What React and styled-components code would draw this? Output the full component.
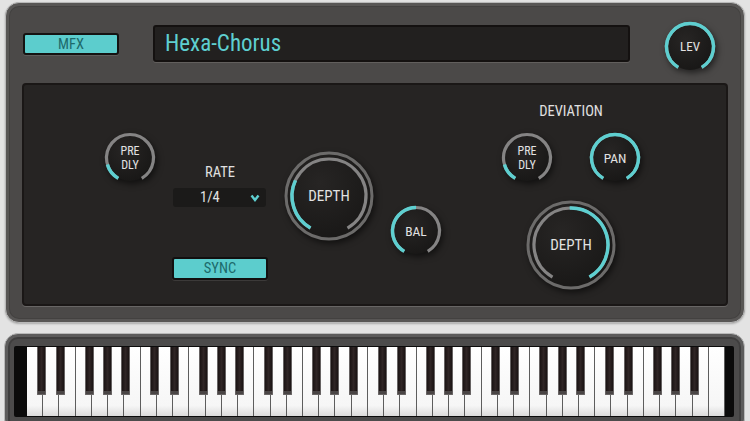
import styled, { createGlobalStyle } from 'styled-components'

const FONT = '"Liberation Sans Narrow", "Roboto Condensed", "DejaVu Sans Condensed", Roboto, sans-serif'
const CYAN = '#5ecfd0'

const GlobalStyle = createGlobalStyle`
    html, body {
        margin: 0;
        padding: 0;
        background: #e3e3e3;
    }
    * {
        box-sizing: border-box;
    }
`

const polar = (c, r, deg) => {
    const a = (deg * Math.PI) / 180
    return [c + r * Math.sin(a), c - r * Math.cos(a)]
}

const arc = (c, r, from, to) => {
    const [x1, y1] = polar(c, r, from)
    const [x2, y2] = polar(c, r, to)
    const large = to - from > 180 ? 1 : 0
    return `M ${x1.toFixed(2)} ${y1.toFixed(2)} A ${r} ${r} 0 ${large} 1 ${x2.toFixed(2)} ${y2.toFixed(2)}`
}

function Knob({ big, from, to, lines, fontSize = 12 }) {
    const size = big ? 100 : 56
    const c = size / 2
    const r = big ? 37 : 23.5
    return (
        <KnobWrap $size={size}>
            <svg width={size} height={size} viewBox={`0 0 ${size} ${size}`}>
                <defs>
                    <radialGradient id="kbody" cx="40%" cy="35%" r="70%">
                        <stop offset="0%" stopColor="#272524" />
                        <stop offset="100%" stopColor="#181716" />
                    </radialGradient>
                </defs>
                {big ? (
                    <>
                        <circle cx={c} cy={c} r={44} fill="url(#kbody)" />
                        <circle cx={c} cy={c} r={43} fill="none" stroke="#6c6b6a" strokeWidth="3" />
                    </>
                ) : (
                    <circle cx={c} cy={c} r={23} fill="url(#kbody)" />
                )}
                <path d={arc(c, r, -150, 150)} fill="none" stroke="#858484" strokeWidth="3.2" />
                <path d={arc(c, r, from, to)} fill="none" stroke={CYAN} strokeWidth="3.4" />
            </svg>
            <KnobLabel $fontSize={fontSize}>
                {lines.map(l => <span key={l}>{l}</span>)}
            </KnobLabel>
        </KnobWrap>
    )
}

const WHITE_COUNT = 43
const BLACK_OFFSETS = { 0: -2, 1: 1, 3: -2.5, 4: -0.5, 5: 1.5 }

function Keyboard() {
    const whites = Array.from({ length: WHITE_COUNT }, (_, i) => i)
    const blacks = whites.filter(i => i < WHITE_COUNT - 1 && BLACK_OFFSETS[i % 7] !== undefined)
    return (
        <KeyboardFrame>
            <KeyBed>
                <KeyRow>
                    {whites.map(i => <WhiteKey key={i} />)}
                    {blacks.map(i => (
                        <BlackKey
                            key={'b' + i}
                            style={{ left: `calc(${((i + 1) / WHITE_COUNT) * 100}% + ${BLACK_OFFSETS[i % 7] - 4.5}px)` }}
                        />
                    ))}
                </KeyRow>
            </KeyBed>
        </KeyboardFrame>
    )
}

function App() {
    return (
        <Screen>
            <GlobalStyle />
            <TopPanel>
                <Header>
                    <MfxButton>MFX</MfxButton>
                    <TitleDisplay>Hexa-Chorus</TitleDisplay>
                    <LevSlot>
                        <Knob from={-150} to={150} lines={['LEV']} fontSize={13} />
                    </LevSlot>
                </Header>
                <Stage>
                    <Column $left={78} $top={45}>
                        <Knob from={-150} to={-106} lines={['PRE', 'DLY']} fontSize={12} />
                    </Column>
                    <RateColumn>
                        <SectionLabel>RATE</SectionLabel>
                        <Dropdown>
                            <span>1/4</span>
                            <svg width="10" height="8" viewBox="0 0 10 8">
                                <polyline points="1.5,1.5 5,6 8.5,1.5" fill="none" stroke={CYAN} strokeWidth="2.4" />
                            </svg>
                        </Dropdown>
                        <SyncButton>SYNC</SyncButton>
                    </RateColumn>
                    <Column $left={11} $top={61}>
                        <Knob big from={-150} to={-65} lines={['DEPTH']} fontSize={15} />
                    </Column>
                    <Column $left={9} $top={118}>
                        <Knob from={-150} to={0} lines={['BAL']} fontSize={13.5} />
                    </Column>
                    <DeviationGroup>
                        <SectionLabel>DEVIATION</SectionLabel>
                        <KnobPair>
                            <Knob from={-150} to={-106} lines={['PRE', 'DLY']} fontSize={12} />
                            <Knob from={-150} to={150} lines={['PAN']} fontSize={13.5} />
                        </KnobPair>
                        <DepthSlot>
                            <Knob big from={-2} to={150} lines={['DEPTH']} fontSize={15} />
                        </DepthSlot>
                    </DeviationGroup>
                </Stage>
            </TopPanel>
            <Keyboard />
        </Screen>
    )
}

export default App

const Screen = styled.div`
    width: 750px;
    height: 421px;
    overflow: hidden;
    padding-top: 2px;
    background: #e3e3e3;
    font-family: ${FONT};
`

const TopPanel = styled.div`
    margin: 0 5px;
    height: 321px;
    padding: 0 16px;
    border: 1px solid #b9b9b9;
    border-radius: 14px;
    background: #4b4948;
    box-shadow: inset 0 0 0 3px #585655, inset 0 0 0 4px #434140, 0 1px 2px rgba(0, 0, 0, 0.25);
`

const Header = styled.div`
    display: flex;
    align-items: center;
    height: 80px;
`

const MfxButton = styled.div`
    margin: 2px 0 0 1px;
    width: 96px;
    height: 22px;
    display: flex;
    align-items: center;
    justify-content: center;
    border: 2px solid #151312;
    border-radius: 3px;
    background: #5ccdcd;
    color: #1d6a6b;
    font-size: 14.5px;
    box-shadow: 0 1px 0 #5e5c5b;
`

const TitleDisplay = styled.div`
    margin-left: 34px;
    width: 477px;
    height: 37px;
    display: flex;
    align-items: center;
    padding-left: 10px;
    border: 2px solid #141110;
    border-radius: 3px;
    background: #22201f;
    color: ${CYAN};
    font-size: 23px;
    box-shadow: 0 1px 0 #625f5d;
`

const LevSlot = styled.div`
    margin: 8px 0 0 32px;
`

const Stage = styled.div`
    display: flex;
    align-items: flex-start;
    height: 223px;
    border: 2px solid #1a1716;
    border-radius: 4px;
    background: #262423;
    box-shadow: 0 1px 0 #686665;
`

const Column = styled.div`
    margin-left: ${p => p.$left}px;
    margin-top: ${p => p.$top}px;
`

const KnobWrap = styled.div`
    display: grid;
    width: ${p => p.$size}px;
    height: ${p => p.$size}px;

    & > * {
        grid-area: 1 / 1;
    }

    svg {
        filter: drop-shadow(2px 3px 3px rgba(0, 0, 0, 0.55));
    }
`

const KnobLabel = styled.div`
    position: relative;
    z-index: 1;
    place-self: center;
    display: flex;
    flex-direction: column;
    align-items: center;
    color: #e2e2e2;
    font-size: ${p => p.$fontSize}px;
    line-height: 14px;
`

const SectionLabel = styled.div`
    height: 16px;
    line-height: 16px;
    text-align: center;
    color: #e0e0e0;
    font-size: 14.5px;
`

const RateColumn = styled.div`
    margin-left: 14px;
    width: 96px;
    padding-top: 80px;
    display: flex;
    flex-direction: column;
`

const Dropdown = styled.div`
    margin: 7px 0 0 1px;
    width: 93px;
    height: 19px;
    display: flex;
    align-items: center;
    justify-content: space-between;
    padding: 0 6px 0 27px;
    border-radius: 3px;
    background: #1b1a19;
    color: #e2e2e2;
    font-size: 14.5px;
`

const SyncButton = styled.div`
    margin-top: 50px;
    height: 23px;
    display: flex;
    align-items: center;
    justify-content: center;
    border: 2px solid #121010;
    border-radius: 3px;
    background: #5ccdcd;
    color: #1d6a6b;
    font-size: 14.5px;
    box-shadow: 0 1px 0 #3c3a39;
`

const DeviationGroup = styled.div`
    margin-left: 55px;
    width: 144px;
    padding-top: 19px;
    display: flex;
    flex-direction: column;
    align-items: center;
`

const KnobPair = styled.div`
    margin-top: 10px;
    display: flex;
    gap: 32px;
`

const DepthSlot = styled.div`
    margin-top: 9px;
`

const KeyboardFrame = styled.div`
    margin: 10px 5px 0 4px;
    height: 100px;
    padding: 12px 10px 0 9px;
    border: 1px solid #b9b9b9;
    border-radius: 14px;
    background: #4c4b4b;
    box-shadow: inset 0 0 0 3px #5c5b5b, inset 0 0 0 5px #3f3e3e;
`

const KeyBed = styled.div`
    padding: 1px 9px 1px 13px;
    background: #0b0b0b;
    border-radius: 2px;
`

const KeyRow = styled.div`
    position: relative;
    display: flex;
    height: 69px;
`

const WhiteKey = styled.div`
    flex: 1;
    background: linear-gradient(#ffffff, #f6f6f6 85%, #dcdcdc);
    border-right: 1px solid #5d5d5d;

    &:last-of-type {
        border-right: none;
    }
`

const BlackKey = styled.div`
    position: absolute;
    top: 0;
    width: 9px;
    height: 48px;
    border: 1px solid #676363;
    border-top: none;
    border-radius: 0 0 1px 1px;
    background: linear-gradient(90deg, #1a1313, #2f2525 50%, #1a1313);
    box-shadow: inset 0 -3px 0 #4a4545;
`
